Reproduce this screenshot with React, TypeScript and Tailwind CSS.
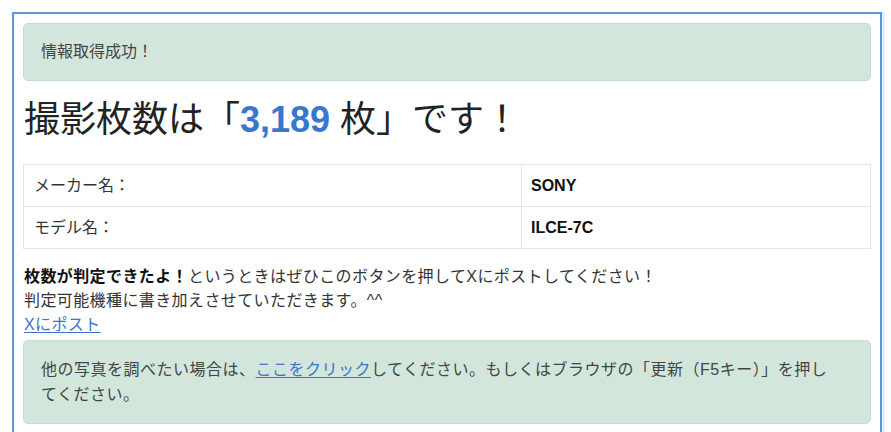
export default function App() {
  const font = { fontFamily: '"Liberation Sans", "Noto Sans CJK JP", sans-serif' };
  return (
    <div className="min-h-screen bg-white pt-[12px] pl-[12px]" style={font}>
      <div className="w-[870px] border-2 border-[#5b9bd5] px-[9px] pt-[9px] pb-[40px] text-[#333] shadow-[3px_0_0_#e3eef8]">
        <div className="rounded-[5px] border border-[#c6ded1] bg-[#d3e6dc] px-[17px] py-[16px] text-[16px] leading-[24px] text-[#444]">
          情報取得成功！
        </div>
        <h1 className="mt-[17px] mb-[23px] pl-[1px] text-[36px] leading-[43px] text-[#222]">
          撮影枚数は「<span className="font-bold text-[#3a76cc]">3,189</span> 枚」です！
        </h1>
        <table className="w-full border-collapse text-[16px] leading-[24px]">
          <tbody>
            <tr>
              <td className="w-[498px] border border-[#e2e4e6] px-[10px] py-[8.5px]">メーカー名：</td>
              <td className="border border-[#e2e4e6] px-[9px] py-[8.5px] font-bold text-[#111]">SONY</td>
            </tr>
            <tr>
              <td className="border border-[#e2e4e6] px-[10px] py-[8.5px]">モデル名：</td>
              <td className="border border-[#e2e4e6] px-[9px] py-[8.5px] font-bold text-[#111]">ILCE-7C</td>
            </tr>
          </tbody>
        </table>
        <div className="mt-[16px] pl-[1px] text-[16px] leading-[24px] tracking-[0.4px]">
          <p>
            <b className="text-[#111]">枚数が判定できたよ！</b>というときはぜひこのボタンを押してXにポストしてください！
          </p>
          <p>判定可能機種に書き加えさせていただきます。^^</p>
          <a href="#" className="text-[#3a74cf] underline underline-offset-2">Xにポスト</a>
        </div>
        <div className="mt-[3px] rounded-[5px] border border-[#c6ded1] bg-[#d3e6dc] px-[17px] py-[16px] text-[16px] leading-[25px] tracking-[0.5px] text-[#444]">
          他の写真を調べたい場合は、<a href="#" className="text-[#3a74cf] underline underline-offset-2">ここをクリック</a>してください。もしくはブラウザの「更新（F5キー）」を押し<br />てください。
        </div>
      </div>
    </div>
  );
}
